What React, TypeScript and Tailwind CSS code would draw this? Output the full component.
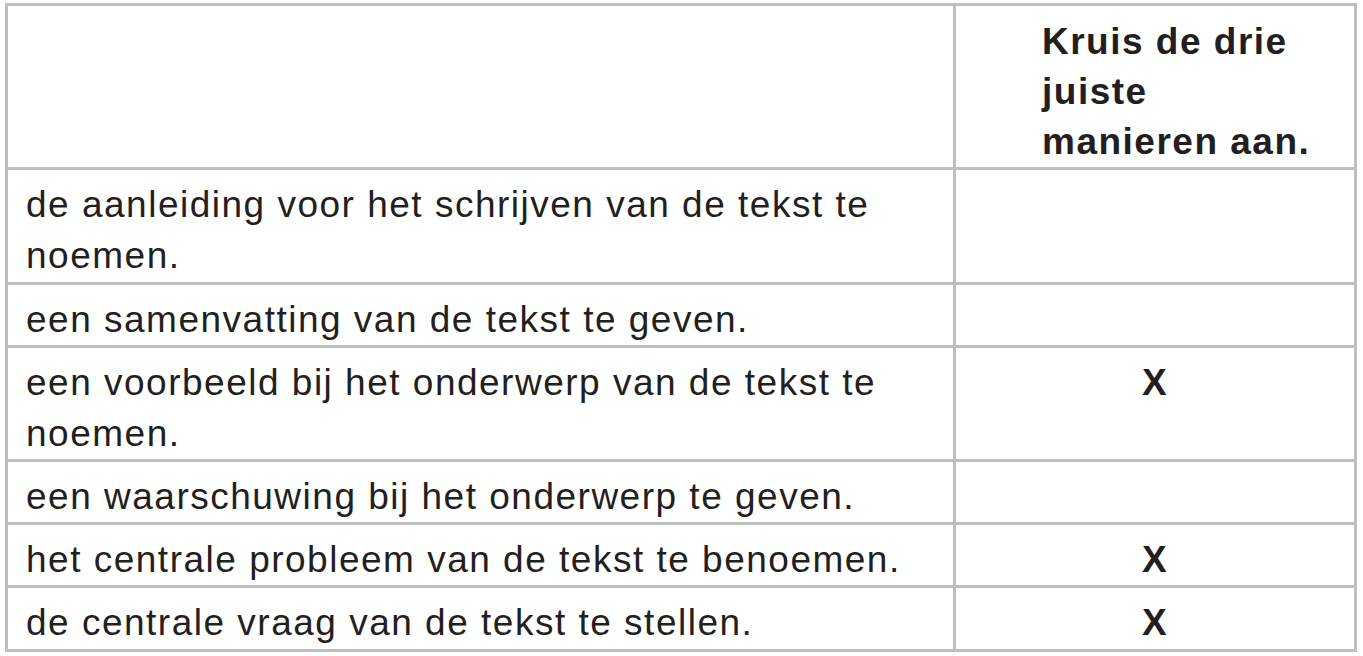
import React from "react";

const rows: { text: React.ReactNode; x: boolean; h: string }[] = [
  { text: <>de aanleiding voor het schrijven van de tekst te<br />noemen.</>, x: false, h: "h-[115px]" },
  { text: "een samenvatting van de tekst te geven.", x: false, h: "h-[63px]" },
  { text: <>een voorbeeld bij het onderwerp van de tekst te<br />noemen.</>, x: true, h: "h-[114px]" },
  { text: "een waarschuwing bij het onderwerp te geven.", x: false, h: "h-[63px]" },
  { text: "het centrale probleem van de tekst te benoemen.", x: true, h: "h-[63px]" },
  { text: "de centrale vraag van de tekst te stellen.", x: true, h: "h-[61px]" },
];

export default function App() {
  return (
    <div
      className="w-[1363px] h-[656px] bg-white pt-[3px] pl-[5px] text-[#231f20]"
      style={{ fontFamily: '"Liberation Sans", Arial, sans-serif' }}
    >
      <div className="w-[1352px] border-[3px] border-[#bfbfbf] grid grid-cols-[948px_398px] text-[37px] tracking-[1.5px]">
        <div className="h-[164px] border-r-[3px] border-b-[3px] border-[#bfbfbf]" />
        <div className="h-[164px] border-b-[3px] border-[#bfbfbf] pl-[86px] pt-[11px] font-bold leading-[50px]">
          Kruis de drie
          <br />
          juiste
          <br />
          manieren aan.
        </div>
        {rows.map((r, i) => {
          const last = i === rows.length - 1;
          return (
            <React.Fragment key={i}>
              <div
                className={`${r.h} border-r-[3px] border-[#bfbfbf] pl-[18px] pt-[9px] leading-[51px] ${last ? "" : "border-b-[3px]"}`}
              >
                {r.text}
              </div>
              <div
                className={`${r.h} border-[#bfbfbf] pt-[9px] leading-[51px] text-center font-bold ${last ? "" : "border-b-[3px]"}`}
              >
                {r.x ? "X" : ""}
              </div>
            </React.Fragment>
          );
        })}
      </div>
    </div>
  );
}
